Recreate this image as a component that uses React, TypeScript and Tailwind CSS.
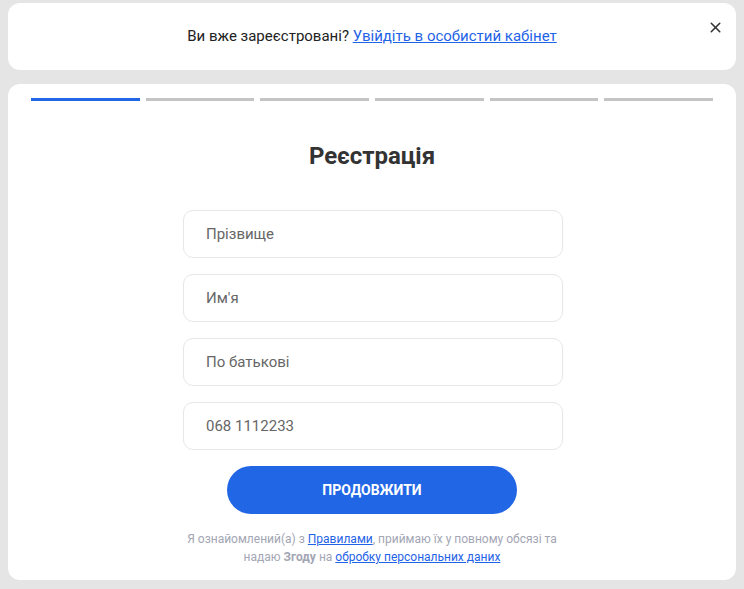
import { X } from 'lucide-react';

const fields = ['Прізвище', "Им'я", 'По батькові', '068 1112233'];

export default function App() {
  return (
    <div className="min-h-[589px] w-[744px] bg-[#e5e5e5] px-2 pt-[3px] pb-2 font-['Roboto',sans-serif]">
      <div className="relative flex h-[67px] items-center justify-center rounded-xl bg-white text-[15px] text-[#222]">
        <span>
          Ви вже зареєстровані?{' '}
          <a href="#" className="text-[#1f63e6] underline">Увійдіть в особистий кабінет</a>
        </span>
        <button className="absolute right-[12px] top-[16px] text-[#333]">
          <X size={17} strokeWidth={2.2} />
        </button>
      </div>

      <div className="mt-[14px] rounded-xl bg-white px-[23px] pt-[14px] pb-[14px]">
        <div className="flex gap-[6px]">
          <div className="h-[3px] flex-1 bg-[#2166e5]" />
          <div className="h-[3px] flex-1 bg-[#c4c4c4]" />
          <div className="h-[3px] flex-1 bg-[#c4c4c4]" />
          <div className="h-[3px] flex-1 bg-[#c4c4c4]" />
          <div className="h-[3px] flex-1 bg-[#c4c4c4]" />
          <div className="h-[3px] flex-1 bg-[#c4c4c4]" />
        </div>

        <h1 className="mt-[41px] text-center text-[24px] font-bold leading-[28px] text-[#333]">Реєстрація</h1>

        <div className="mx-auto mt-[40px] flex w-[380px] translate-x-px flex-col gap-4">
          {fields.map((f) => (
            <div
              key={f}
              className="flex h-[48px] items-center rounded-[10px] border border-[#e6e7eb] px-[22px] text-[15px] text-[#666]"
            >
              {f}
            </div>
          ))}
        </div>

        <button className="mx-auto mt-4 flex h-[48px] w-[290px] items-center justify-center rounded-full bg-[#2166e5] text-[14px] font-bold uppercase text-white">
          Продовжити
        </button>

        <div className="mt-4 flex flex-col items-center text-[12px] leading-[18px] text-[#a3a6b4]">
          <p>
            Я ознайомлений(а) з <a href="#" className="text-[#1f63e6] underline">Правилами</a>, приймаю їх у повному обсязі та
          </p>
          <p>
            надаю <b className="font-bold">Згоду</b> на{' '}
            <a href="#" className="text-[#1f63e6] underline">обробку персональних даних</a>
          </p>
        </div>
      </div>
    </div>
  );
}
